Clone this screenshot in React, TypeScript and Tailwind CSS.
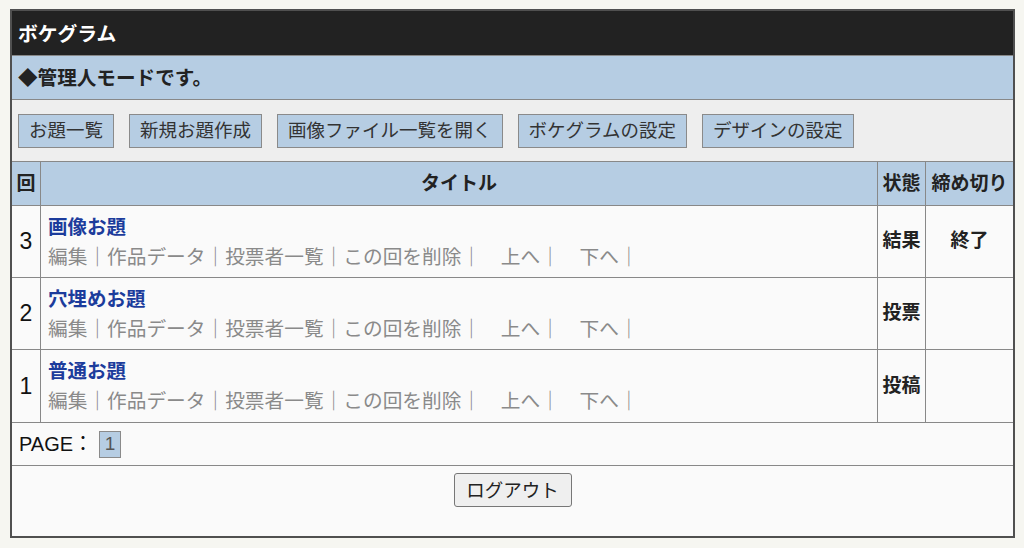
import React from "react";

const rows = [
  { no: "3", title: "画像お題", status: "結果", deadline: "終了" },
  { no: "2", title: "穴埋めお題", status: "投票", deadline: "" },
  { no: "1", title: "普通お題", status: "投稿", deadline: "" },
];

const menu = ["お題一覧", "新規お題作成", "画像ファイル一覧を開く", "ボケグラムの設定", "デザインの設定"];

const links = ["編集", "作品データ", "投票者一覧", "この回を削除", "　上へ", "　下へ"];

export default function App() {
  const rowH = ["h-[71px]", "h-[71px]", "h-[72px]"];
  return (
    <div
      className="min-h-[548px] w-[1024px] bg-[#f6f6f1] pt-[9px] pl-[10px]"
      style={{ fontFamily: '"Liberation Sans", "Noto Sans CJK JP", sans-serif' }}
    >
      <div className="w-[1005px] border-2 border-[#505050] bg-[#888]">
        {/* Title bar */}
        <div className="flex h-[44px] items-center bg-[#222222] pl-[6px] pt-[3px] text-[19.8px] font-bold leading-none text-white">
          ボケグラム
        </div>
        {/* Mode */}
        <div className="mt-px flex h-[43px] items-center bg-[#b6cde3] pl-[6px] pt-[2px] text-[19.6px] font-bold leading-none text-[#222]">
          ◆管理人モードです。
        </div>
        {/* Menu */}
        <div className="mt-px flex h-[61px] items-center gap-[15px] bg-[#eeeeee] pl-[6px]">
          {menu.map((m) => (
            <button
              key={m}
              className="flex h-[34px] items-center border border-[#8a8a8a] bg-[#b6cde3] px-[10px] pt-[2px] text-[18.5px] leading-none text-[#333]"
            >
              {m}
            </button>
          ))}
        </div>
        {/* Table */}
        <div className="mt-px grid grid-cols-[28px_836px_47px_87px] gap-px">
          <div className="flex h-[43px] items-center justify-center bg-[#b6cde3] pt-[1px] text-[19px] font-bold text-[#222]">回</div>
          <div className="flex h-[43px] items-center justify-center bg-[#b6cde3] pt-[1px] text-[19px] font-bold text-[#222]">タイトル</div>
          <div className="flex h-[43px] items-center justify-center bg-[#b6cde3] pt-[1px] text-[19px] font-bold text-[#222]">状態</div>
          <div className="flex h-[43px] items-center justify-center bg-[#b6cde3] pt-[1px] text-[19px] font-bold text-[#222]">締め切り</div>
          {rows.map((r, i) => (
            <React.Fragment key={r.no}>
              <div className={`flex ${rowH[i]} items-center justify-center bg-[#fafafa] text-[23px] text-[#111]`}>
                {r.no}
              </div>
              <div className={`flex ${rowH[i]} flex-col justify-center bg-[#fafafa] pl-[7px]`}>
                <a className="text-[19.5px] font-bold leading-[30px] text-[#1c3c9c]">{r.title}</a>
                <div className="flex text-[19.7px] leading-[30px] whitespace-pre text-[#8a8a8a]">
                  {links.map((l) => (
                    <React.Fragment key={l}>
                      <span>{l}</span>
                      <span className="text-[#8a8a8a]">｜</span>
                    </React.Fragment>
                  ))}
                </div>
              </div>
              <div className={`flex ${rowH[i]} items-center justify-center bg-[#fafafa] text-[19px] font-bold text-[#222]`}>
                {r.status}
              </div>
              <div className={`flex ${rowH[i]} items-center justify-center bg-[#fafafa] text-[19px] font-bold text-[#222]`}>
                {r.deadline}
              </div>
            </React.Fragment>
          ))}
          <div className="col-span-4 flex h-[42px] items-center bg-[#fafafa] pl-[7px]">
            <span className="text-[20px] text-[#111]">PAGE：</span>
            <span className="ml-[6px] flex h-[27px] w-[22px] items-center justify-center border border-[#8a8a8a] bg-[#b6cde3] text-[19px] text-[#555]">
              1
            </span>
          </div>
          <div className="col-span-4 flex h-[70px] justify-center bg-[#fafafa] pt-[7px]">
            <button className="h-[34px] w-[118px] rounded-[3px] border border-[#777] bg-[#efefef] pt-[2px] text-[18.5px] leading-none text-[#222]">
              ログアウト
            </button>
          </div>
        </div>
      </div>
    </div>
  );
}
